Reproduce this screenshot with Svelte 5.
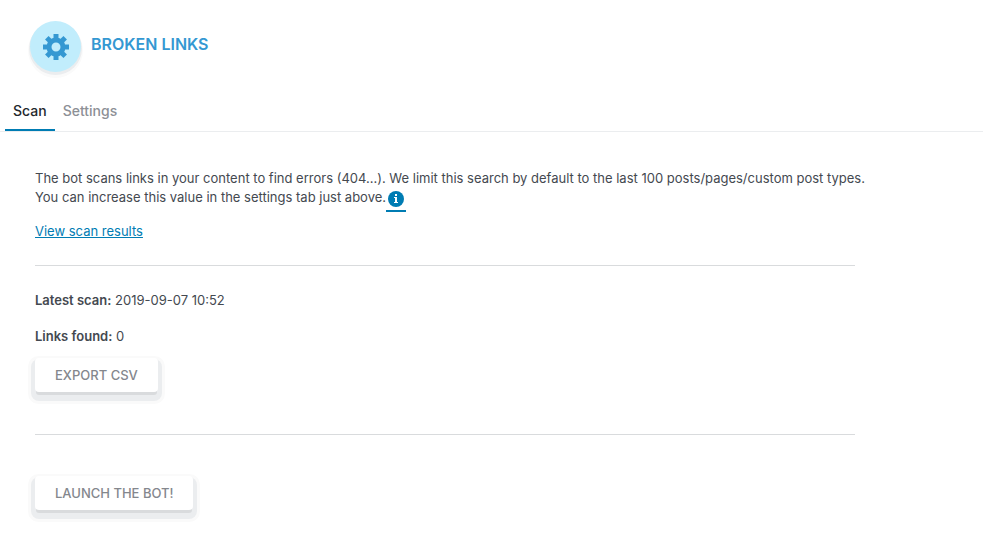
<script lang="ts">
	const tabs = [
		{ id: 'scan', label: 'Scan' },
		{ id: 'settings', label: 'Settings' }
	];
	let active = $state('scan');
	let latestScan = $state('2019-09-07 10:52');
	let linksFound = $state(0);

	const teeth = [0, 45, 90, 135, 180, 225, 270, 315];
</script>

<header>
	<span class="badge">
		<svg viewBox="0 0 26 26" width="26" height="26" aria-hidden="true">
			<circle cx="13" cy="13" r="7" fill="none" stroke="#3498d2" stroke-width="5" />
			{#each teeth as angle}
				<path d="M10.5 0h5v5h-5z" fill="#3498d2" transform="rotate({angle} 13 13)" />
			{/each}
		</svg>
	</span>
	<h1>BROKEN LINKS</h1>
</header>

<nav>
	{#each tabs as tab}
		<button class="tab" class:active={active === tab.id} onclick={() => (active = tab.id)}>
			{tab.label}
		</button>
	{/each}
</nav>

<main>
	<p class="intro">
		The bot scans links in your content to find errors (404...). We limit this search by default to the last 100 posts/pages/custom post types.<br />
		You can increase this value in the settings tab just above.<a class="info" href="#help" aria-label="Help"><svg viewBox="0 0 16 16" width="16" height="16" aria-hidden="true">
			<circle cx="8" cy="8" r="8" fill="#007cb3" />
			<path d="M7 3h2v2H7zM6 6h3v5h1v1H6v-1h1V7H6z" fill="#fff" />
		</svg></a>
	</p>
	<p class="results"><a href="#results">View scan results</a></p>
	<hr />
	<p class="stat"><strong>Latest scan:</strong> {latestScan}</p>
	<p class="stat"><strong>Links found:</strong> {linksFound}</p>
	<button class="action">EXPORT CSV</button>
	<hr class="wide" />
	<button class="action">LAUNCH THE BOT!</button>
</main>

<style>
	:global(body) {
		background: #fff;
		color: #444950;
		font-family: Inter, 'Liberation Sans', sans-serif;
		font-size: 13px;
		line-height: 19px;
	}

	header {
		display: flex;
		align-items: center;
		gap: 10px;
		padding: 21px 30px 19px;
	}

	.badge {
		display: flex;
		align-items: center;
		justify-content: center;
		width: 51px;
		height: 51px;
		border-radius: 50%;
		background: #c1edfc;
		box-shadow: 0 2px 0 1px #ebedef, 0 4px 0 2px #fafafa;
	}

	h1 {
		margin: 0;
		padding-bottom: 6px;
		color: #3498d2;
		font-size: 16px;
		font-weight: 600;
		line-height: 20px;
	}

	nav {
		display: flex;
		padding-left: 5px;
		border-bottom: 1px solid #ebedef;
	}

	.tab {
		height: 40px;
		padding: 0 8px;
		border: 0;
		border-bottom: 2px solid transparent;
		background: none;
		color: #8d9096;
		font: 500 14px Inter, 'Liberation Sans', sans-serif;
		cursor: pointer;
	}

	.tab.active {
		border-bottom-color: #007cb3;
		color: #23282d;
	}

	main {
		max-width: 820px;
		padding: 37px 35px;
	}

	p {
		margin: 0;
	}

	.intro {
		white-space: nowrap;
	}

	a {
		color: #007cb3;
	}

	.info {
		display: inline-flex;
		justify-content: center;
		width: 20px;
		padding-bottom: 3px;
		border-bottom: 2px solid #007cb3;
		vertical-align: top;
		margin-top: 3px;
	}

	.results {
		margin-top: 10px;
	}

	hr {
		margin: 24px 0 25px;
		border: 0;
		border-top: 1px solid #d9dbdd;
	}

	hr.wide {
		margin: 42px 0 41px;
	}

	.stat {
		margin-bottom: 17px;
	}

	.stat + .action {
		margin-top: -5px;
	}

	strong {
		font-weight: 600;
	}

	.action {
		display: block;
		height: 34px;
		padding: 0 20px;
		border: 0;
		border-radius: 4px;
		background: #fff;
		box-shadow: 0 4px 0 -1px #d9dbdd, 0 5px 0 4px #ebedef, 0 5px 0 7px #fafafa;
		color: #84878d;
		font: 500 13px Inter, 'Liberation Sans', sans-serif;
		cursor: pointer;
	}
</style>
